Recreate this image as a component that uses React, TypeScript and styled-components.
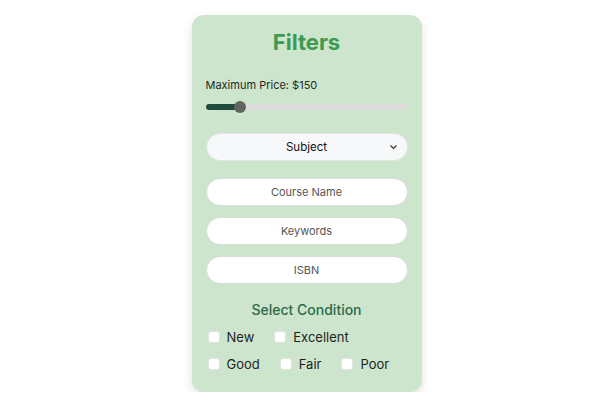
import styled, { createGlobalStyle } from "styled-components";

const GlobalStyle = createGlobalStyle`
  * { box-sizing: border-box; }
  body {
    margin: 0;
    background: #ffffff;
    font-family: Inter, "Noto Sans", sans-serif;
  }
`;

const Page = styled.div`
  display: flex;
  justify-content: center;
  padding: 15px 0 0 6px;
`;

const Card = styled.div`
  width: 230px;
  background: #cce5cc;
  border-radius: 12px;
  padding: 12px 14px 18px;
  box-shadow: 0 4px 10px rgba(0, 0, 0, 0.12);
  display: flex;
  flex-direction: column;
`;

const Title = styled.h2`
  margin: 0;
  text-align: center;
  color: #3e9a52;
  font-size: 22px;
  font-weight: 700;
  line-height: 30px;
`;

const PriceLabel = styled.div`
  margin-top: 20px;
  font-size: 11px;
  color: #1f2a24;
  line-height: 16px;
`;

const SliderTrack = styled.div`
  position: relative;
  margin-top: 11px;
  height: 6px;
  border-radius: 3px;
  background: #dddddd;
`;

const SliderFill = styled.div`
  height: 100%;
  border-radius: 3px;
  background: #1e4d3b;
`;

const Thumb = styled.div`
  position: absolute;
  top: 50%;
  width: 12px;
  height: 12px;
  margin-left: -6px;
  margin-top: -6px;
  border-radius: 50%;
  background: #636363;
`;

const Pill = styled.div<{ $tint?: boolean }>`
  position: relative;
  height: 28px;
  border-radius: 14px;
  background: ${(p) => (p.$tint ? "#f7f8fa" : "#ffffff")};
  border: 1px solid ${(p) => (p.$tint ? "#e2e6e2" : "#d8ddd8")};
  display: flex;
  align-items: center;
  justify-content: center;
  font-size: 11px;
  color: ${(p) => (p.$tint ? "#111111" : "#555555")};
`;

const SelectPill = styled(Pill)`
  margin-top: 23px;
  margin-bottom: 17px;
  font-weight: 400;
  font-size: 11.5px;
`;

const Chevron = styled.svg`
  position: absolute;
  right: 9px;
  top: 50%;
  margin-top: -4px;
`;

const Fields = styled.div`
  display: flex;
  flex-direction: column;
  gap: 11px;
`;

const SectionTitle = styled.div`
  margin-top: 16px;
  text-align: center;
  color: #2d6a4a;
  font-size: 14px;
  font-weight: 500;
  line-height: 20px;
`;

const CheckRow = styled.div`
  display: flex;
  margin-top: 7px;
  padding-left: 2px;
`;

const CheckItem = styled.label`
  display: flex;
  align-items: center;
  gap: 7px;
  margin-right: 20px;
  font-size: 13px;
  color: #1f1f1f;
  line-height: 20px;
`;

const Box = styled.span`
  width: 12px;
  height: 12px;
  border-radius: 3px;
  background: #ffffff;
  border: 1px solid #e3e3e3;
`;

function Check({ label }: { label: string }) {
  return (
    <CheckItem>
      <Box />
      {label}
    </CheckItem>
  );
}

export default function App() {
  const pct = 17;
  return (
    <>
      <GlobalStyle />
      <Page>
        <Card>
          <Title>Filters</Title>
          <PriceLabel>Maximum Price: $150</PriceLabel>
          <SliderTrack>
            <SliderFill style={{ width: `${pct}%` }} />
            <Thumb style={{ left: `${pct}%` }} />
          </SliderTrack>
          <SelectPill $tint>
            Subject
            <Chevron width="9" height="8" viewBox="0 0 9 8">
              <path d="M1.5 2.5 L4.5 5.5 L7.5 2.5" fill="none" stroke="#333" strokeWidth="1.2" />
            </Chevron>
          </SelectPill>
          <Fields>
            <Pill>Course Name</Pill>
            <Pill>Keywords</Pill>
            <Pill>ISBN</Pill>
          </Fields>
          <SectionTitle>Select Condition</SectionTitle>
          <CheckRow>
            <Check label="New" />
            <Check label="Excellent" />
          </CheckRow>
          <CheckRow>
            <Check label="Good" />
            <Check label="Fair" />
            <Check label="Poor" />
          </CheckRow>
        </Card>
      </Page>
    </>
  );
}
